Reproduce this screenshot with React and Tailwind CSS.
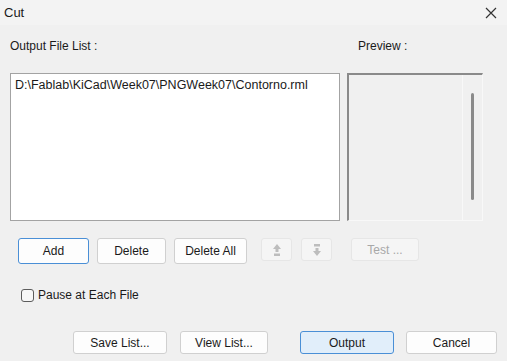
import React from "react";

const font = { fontFamily: '"Liberation Sans", Arial, sans-serif' };

const Btn = ({ children, className = "", disabled, primary, focused }) => (
    <button
        className={`flex items-center justify-center rounded-[3px] border text-[12px] ${
            disabled
                ? "border-[#e6e6e6] bg-[#f5f5f5] text-[#a8a8a8]"
                : primary
                ? "border-[#4a8fd6] bg-[#e1eefa] text-[#1a1a1a]"
                : focused
                ? "border-[#4a8fd6] bg-[#fdfdfd] text-[#1a1a1a]"
                : "border-[#d0d0d0] bg-[#fdfdfd] text-[#1a1a1a]"
        } ${className}`}
    >
        {children}
    </button>
);

const UpIcon = () => (
    <svg width="10" height="14" viewBox="0 0 10 14">
        <path d="M5 1 L9 6 H6.5 V9 H3.5 V6 H1 Z" fill="#bdbdbd" />
        <rect x="2" y="10.5" width="6" height="2.5" fill="#bdbdbd" />
    </svg>
);

const DownIcon = () => (
    <svg width="10" height="14" viewBox="0 0 10 14">
        <rect x="2" y="1" width="6" height="2.5" fill="#bdbdbd" />
        <path d="M5 13 L9 8 H6.5 V5 H3.5 V8 H1 Z" fill="#bdbdbd" />
    </svg>
);

export default function App() {
    return (
        <div className="w-[507px] h-[361px] bg-[#f0f0f0] text-[#1a1a1a] overflow-hidden" style={font}>
            {/* title bar */}
            <div className="h-[25px] bg-[#f3f3f3] flex items-center justify-between pl-[4px] pr-[10px]">
                <span className="text-[13px]">Cut</span>
                <svg width="12" height="12" viewBox="0 0 12 12">
                    <path d="M1 1 L11 11 M11 1 L1 11" stroke="#333" strokeWidth="1.2" />
                </svg>
            </div>

            <div className="pl-[10px]">
                <div className="flex mt-[13px] h-[16px] items-center text-[12px]">
                    <span className="w-[348px]">Output File List :</span>
                    <span>Preview :</span>
                </div>

                <div className="flex mt-[19px] gap-[7px]">
                    <div className="w-[330px] h-[148px] bg-white border border-[#a3a3a3] px-[4px] pt-[2px] text-[12.5px]">
                        D:\Fablab\KiCad\Week07\PNGWeek07\Contorno.rml
                    </div>
                    <div className="w-[136px] h-[148px] border-t-2 border-l-2 border-t-[#8a8a8a] border-l-[#8a8a8a] border-r border-b border-r-[#f8f8f8] border-b-[#f8f8f8] flex justify-end">
                        <div className="w-[20px] h-full border-l border-[#f8f8f8] flex justify-center pt-[18px] pb-[20px]">
                            <div className="w-[3px] h-full bg-[#8a8a8a] rounded-full" />
                        </div>
                    </div>
                </div>

                <div className="flex mt-[17px] h-[26px] items-stretch">
                    <Btn focused className="ml-[8px] w-[71px]">Add</Btn>
                    <Btn className="ml-[8px] w-[69px]">Delete</Btn>
                    <Btn className="ml-[8px] w-[73px]">Delete All</Btn>
                    <Btn disabled className="ml-[14px] w-[31px] h-[23px]">
                        <UpIcon />
                    </Btn>
                    <Btn disabled className="ml-[9px] w-[31px] h-[23px]">
                        <DownIcon />
                    </Btn>
                    <Btn disabled className="ml-[19px] w-[68px] h-[23px]">Test ...</Btn>
                </div>

                <div className="flex items-center mt-[24px] ml-[11px] h-[14px] gap-[4px] text-[12px]">
                    <span className="w-[13px] h-[13px] rounded-[3px] border border-[#5c5c5c] bg-[#f7f7f7]" />
                    <span>Pause at Each File</span>
                </div>

                <div className="flex mt-[29px] h-[23px] items-stretch">
                    <Btn className="ml-[63px] w-[94px]">Save List...</Btn>
                    <Btn className="ml-[13px] w-[88px]">View List...</Btn>
                    <Btn primary className="ml-[32px] w-[94px]">Output</Btn>
                    <Btn className="ml-[12px] w-[91px]">Cancel</Btn>
                </div>
            </div>
        </div>
    );
}
